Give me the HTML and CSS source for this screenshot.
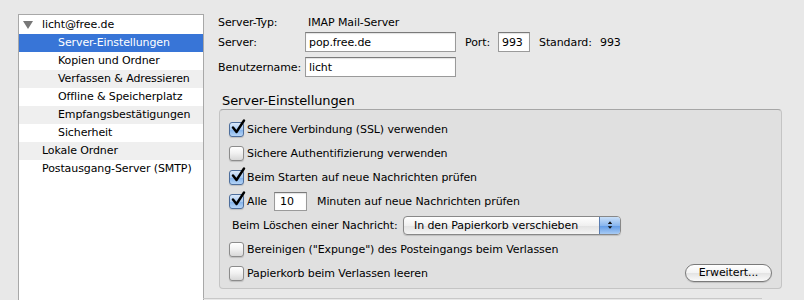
FILE: index.html
```html
<!DOCTYPE html>
<html lang="de">
<head>
    <meta charset="UTF-8">
    <title>Konten-Einstellungen</title>
    <link rel="stylesheet" href="styles.css">
</head>
<body>
    <div class="tree">
        <div class="row account"><span class="twisty"></span>licht@free.de</div>
        <div class="row child selected">Server-Einstellungen</div>
        <div class="row child">Kopien und Ordner</div>
        <div class="row child alt">Verfassen &amp; Adressieren</div>
        <div class="row child">Offline &amp; Speicherplatz</div>
        <div class="row child alt">Empfangsbestätigungen</div>
        <div class="row child">Sicherheit</div>
        <div class="row top alt">Lokale Ordner</div>
        <div class="row top">Postausgang-Server (SMTP)</div>
    </div>

    <div class="panel">
        <div class="field type-row">
            <span class="label">Server-Typ:</span>
            <span class="value">IMAP Mail-Server</span>
        </div>
        <div class="field server-row">
            <span class="label">Server:</span>
            <span class="input server">pop.free.de</span>
            <span class="port-label">Port:</span>
            <span class="input port">993</span>
            <span class="std-label">Standard:</span>
            <span>993</span>
        </div>
        <div class="field user-row">
            <span class="label">Benutzername:</span>
            <span class="input server">licht</span>
        </div>

        <div class="legend">Server-Einstellungen</div>
        <div class="group">
            <div class="opt">
                <span class="cb checked"><svg viewBox="0 0 18 18"><path d="M4 8.5 L7.5 13 L15 1.5" /></svg></span>
                Sichere Verbindung (SSL) verwenden
            </div>
            <div class="opt">
                <span class="cb"></span>
                Sichere Authentifizierung verwenden
            </div>
            <div class="opt">
                <span class="cb checked"><svg viewBox="0 0 18 18"><path d="M4 8.5 L7.5 13 L15 1.5" /></svg></span>
                Beim Starten auf neue Nachrichten prüfen
            </div>
            <div class="opt">
                <span class="cb checked"><svg viewBox="0 0 18 18"><path d="M4 8.5 L7.5 13 L15 1.5" /></svg></span>
                Alle <span class="input minutes">10</span> Minuten auf neue Nachrichten prüfen
            </div>
            <div class="opt delete-row">
                <span class="del-label">Beim Löschen einer Nachricht:</span>
                <span class="select">
                    <span class="select-text">In den Papierkorb verschieben</span>
                    <span class="stepper">
                        <svg viewBox="0 0 8 14"><path d="M1 5.5 L4 2 L7 5.5 Z M1 8.5 L4 12 L7 8.5 Z" /></svg>
                    </span>
                </span>
            </div>
            <div class="opt">
                <span class="cb"></span>
                Bereinigen ("Expunge") des Posteingangs beim Verlassen
            </div>
            <div class="opt last-row">
                <span class="cb"></span>
                Papierkorb beim Verlassen leeren
                <span class="button">Erweitert...</span>
            </div>
        </div>
        <div class="separator"></div>
    </div>
</body>
</html>
```

FILE: styles.css
```css
body {
    margin: 0;
    padding: 14px 0 0 18px;
    display: flex;
    align-items: flex-start;
    background: #e8e8e8;
    font-family: 'DejaVu Sans', 'Liberation Sans', sans-serif;
    font-size: 11px;
    letter-spacing: -0.1px;
    color: #000;
    height: 286px;
    overflow: hidden;
}

/* account tree */
.tree {
    box-sizing: border-box;
    width: 186px;
    height: 286px;
    padding-top: 1px;
    background: #fff;
    border: 1px solid #a8a8a8;
    border-bottom: none;
    flex-shrink: 0;
}

.row {
    height: 18px;
    line-height: 18px;
    white-space: nowrap;
    position: relative;
}

.row.alt {
    background: #efefef;
}

.row.account,
.row.top {
    padding-left: 23px;
}

.row.child {
    padding-left: 39px;
}

.row.selected {
    background: #3875d7;
    color: #fff;
}

.twisty {
    position: absolute;
    left: 4px;
    top: 5px;
    width: 0;
    height: 0;
    border-left: 5px solid transparent;
    border-right: 5px solid transparent;
    border-top: 8px solid #777;
}

/* right side */
.panel {
    margin-left: 14px;
    width: 564px;
    display: flex;
    flex-direction: column;
}

.field {
    display: flex;
    align-items: center;
    white-space: nowrap;
}

.label {
    width: 87px;
    flex-shrink: 0;
}

.type-row {
    height: 16px;
}

.type-row .value {
    margin-left: 3px;
}

.server-row {
    margin-top: 2px;
    height: 20px;
}

.user-row {
    margin-top: 5px;
    height: 20px;
}

.input {
    display: inline-block;
    box-sizing: border-box;
    height: 20px;
    line-height: 19px;
    padding: 0 3px;
    background: #fff;
    border: 1px solid #9a9a9a;
    border-top-color: #7a7a7a;
    box-shadow: inset 0 1px 1px rgba(0, 0, 0, 0.12);
}

.input.server {
    width: 151px;
}

.port-label {
    margin-left: 9px;
    width: 33px;
}

.input.port {
    width: 32px;
}

.std-label {
    margin-left: 9px;
    width: 61px;
}

.legend {
    margin-top: 16px;
    height: 16px;
    line-height: 16px;
    padding-left: 4px;
    font-size: 13px;
}

.group {
    box-sizing: border-box;
    margin-left: 1px;
    width: 563px;
    height: 180px;
    padding: 7px 0 0 9px;
    background: #e0e0e0;
    border: 1px solid #c4c4c4;
    border-top-color: #a6a6a6;
    border-radius: 4px;
}

.opt {
    height: 24px;
    display: flex;
    align-items: center;
    gap: 3px;
    white-space: nowrap;
}

.cb {
    position: relative;
    box-sizing: border-box;
    width: 15px;
    height: 15px;
    flex-shrink: 0;
    border: 1px solid #8c8c8c;
    border-radius: 3px;
    background: linear-gradient(#ffffff, #f2f2f2 45%, #d8d8d8);
    box-shadow: 0 1px 1px rgba(0, 0, 0, 0.15);
}

.cb.checked {
    border-color: #4d6e9c;
    background: linear-gradient(#dbe9fa, #a9cbf2 50%, #7fb0ea 51%, #b5d4f6);
}

.cb svg {
    position: absolute;
    left: -1px;
    top: -4px;
    width: 18px;
    height: 18px;
    fill: none;
    stroke: #000;
    stroke-width: 2.4;
    stroke-linecap: round;
    stroke-linejoin: round;
}

.input.minutes {
    width: 33px;
    height: 19px;
    line-height: 18px;
    padding-left: 5px;
    margin: 0 7px 0 4px;
}

.delete-row {
    padding-left: 3px;
    gap: 0;
}

.del-label {
    width: 171px;
}

.select {
    position: relative;
    box-sizing: border-box;
    width: 218px;
    height: 19px;
    display: flex;
    align-items: center;
    border: 1px solid #888;
    border-radius: 4px;
    background: linear-gradient(#ffffff, #f0f0f0 50%, #e2e2e2 51%, #f4f4f4);
    box-shadow: 0 1px 1px rgba(0, 0, 0, 0.15);
    overflow: hidden;
}

.select-text {
    flex: 1;
    padding-left: 10px;
}

.stepper {
    width: 20px;
    height: 100%;
    display: flex;
    align-items: center;
    justify-content: center;
    border-left: 1px solid #5a7db0;
    background: linear-gradient(#c9dff8, #8ab7ee 50%, #5f9ae6 51%, #a8cbf4);
}

.stepper svg {
    width: 6px;
    height: 12px;
    fill: #111;
}

.button {
    margin-left: auto;
    margin-right: 9px;
    box-sizing: border-box;
    width: 87px;
    height: 18px;
    line-height: 16px;
    text-align: center;
    border: 1px solid #7a7a7a;
    border-radius: 9px;
    background: linear-gradient(#ffffff, #f3f3f3 50%, #e3e3e3 51%, #fafafa);
    box-shadow: 0 1px 1px rgba(0, 0, 0, 0.15);
}

.separator {
    margin-top: 9px;
    margin-left: -15px;
    width: 559px;
    border-top: 1px solid #c8c8c8;
}
```
